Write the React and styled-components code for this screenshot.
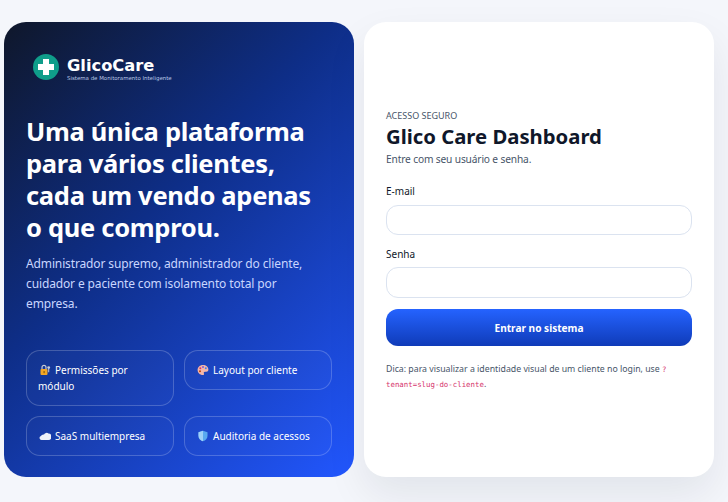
import styled, { createGlobalStyle } from "styled-components";

const Global = createGlobalStyle`
  * { box-sizing: border-box; }
  html, body { margin: 0; height: 100%; }
  body {
    background: #f4f6fb;
    font-family: "Noto Sans", "Open Sans", sans-serif;
    overflow: hidden;
  }
`;

const Page = styled.div`
  display: grid;
  grid-template-columns: 350px 350px;
  gap: 10px;
  padding: 22px 0 0 4px;
  height: 502px;
`;

const Hero = styled.section`
  height: 455px;
  border-radius: 22px;
  padding: 30px 22px 21px 22px;
  color: #fff;
  background: linear-gradient(135deg, #0f172a 0%, #0e2e88 42%, #2257ff 100%);
  display: flex;
  flex-direction: column;
`;

const Brand = styled.div`
  display: flex;
  align-items: center;
  gap: 8px;
  padding-left: 7px;
  height: 30px;
`;

const BrandText = styled.div`
  display: flex;
  flex-direction: column;
  padding-top: 4px;
  font-family: "DejaVu Sans", sans-serif;
`;

const BrandName = styled.span`
  font-size: 16.3px;
  font-weight: 700;
  line-height: 18px;
`;

const BrandTag = styled.span`
  font-size: 5.45px;
  line-height: 7px;
  color: #b9c6e6;
`;

const Headline = styled.h1`
  margin: 33px 0 0;
  font-size: 25.5px;
  line-height: 32px;
  font-weight: 700;
  letter-spacing: -0.3px;
`;

const Lead = styled.p`
  margin: 11px 0 0;
  padding-right: 20px;
  font-size: 12px;
  line-height: 20px;
  letter-spacing: -0.13px;
  color: #c9d6ff;
`;

const Chips = styled.div`
  margin-top: auto;
  display: grid;
  grid-template-columns: 148px 148px;
  gap: 10px;
  align-items: start;
`;

const Chip = styled.div`
  border: 1px solid rgba(255, 255, 255, 0.2);
  border-radius: 14px;
  background: rgba(255, 255, 255, 0.02);
  padding: 11px;
  font-size: 10px;
  line-height: 16px;
  min-height: 40px;
  ${(p) => p.$tall && "min-height: 56px;"}
`;

const ChipIcon = styled.svg`
  display: inline-block;
  width: 12px;
  height: 12px;
  margin: 0 4px 0 1px;
  vertical-align: -2px;
`;

const Card = styled.section`
  height: 455px;
  border-radius: 22px;
  background: #fff;
  padding: 2px 22px 0;
  box-shadow: 0 18px 40px rgba(15, 23, 42, 0.08);
  display: flex;
  flex-direction: column;
  justify-content: center;
`;

const Eyebrow = styled.div`
  font-size: 9px;
  line-height: 14px;
  color: #475569;
  text-transform: uppercase;
`;

const Title = styled.h2`
  margin: -1px 0 0;
  font-size: 20.3px;
  line-height: 28px;
  font-weight: 700;
  color: #0f172a;
`;

const Sub = styled.p`
  margin: 1px 0 0;
  font-size: 10.2px;
  line-height: 16px;
  letter-spacing: -0.15px;
  color: #475569;
`;

const Form = styled.form`
  margin-top: 16px;
  display: flex;
  flex-direction: column;
`;

const Label = styled.label`
  font-size: 10px;
  line-height: 16px;
  color: #0f172a;
  margin-bottom: ${(p) => (p.$tight ? "5px" : "6px")};
`;

const Input = styled.input`
  height: ${(p) => (p.$last ? "31px" : "30px")};
  border: 1px solid #dbe3f0;
  border-radius: 12px;
  background: #fff;
  margin-bottom: 11px;
  outline: none;
`;

const Submit = styled.button`
  height: 37px;
  border: 0;
  border-radius: 12px;
  background: linear-gradient(180deg, #2563ff 0%, #0f3bb8 100%);
  color: #fff;
  font-family: inherit;
  font-size: 10.1px;
  font-weight: 700;
`;

const Hint = styled.p`
  margin: 16px 0 0;
  font-size: 8.75px;
  line-height: 14px;
  color: #475569;
`;

const Code = styled.code`
  font-family: "DejaVu Sans Mono", monospace;
  font-size: 7.4px;
  color: #d6336c;
`;

const Lock = () => (
  <ChipIcon viewBox="0 0 12 12">
    <path d="M3 5V3.4a2 2 0 0 1 4 0V5" fill="none" stroke="#c9ccd4" strokeWidth="1.2" />
    <rect x="1.5" y="5" width="7" height="6" rx="1" fill="#f5a623" />
    <rect x="4.5" y="7" width="1.2" height="2.2" fill="#8a5a10" />
    <circle cx="9.7" cy="3.6" r="1.4" fill="#c8ccd6" />
    <path d="M9.2 4.6h1v3.6h-1z" fill="#c8ccd6" />
  </ChipIcon>
);

const Palette = () => (
  <ChipIcon viewBox="0 0 12 12">
    <path d="M6 1C2.8 1 .6 3.2.6 6s2.300 5 5.200 5c1.300 0 1.500-.9 1.100-1.600-.4-.8 0-1.600 1-1.600h1.500c1.200 0 2-.8 2-2C11.400 2.800 9 1 6 1z" fill="#f4b6a8" />
    <circle cx="3.300" cy="4.300" r="1" fill="#d6336c" />
    <circle cx="6" cy="3" r="1" fill="#7c5cd6" />
    <circle cx="8.800" cy="4.300" r="1" fill="#3b82f6" />
    <circle cx="3" cy="7.200" r="1" fill="#c2410c" />
  </ChipIcon>
);

const Cloud = () => (
  <ChipIcon viewBox="0 0 12 12">
    <path d="M2.500 10a2 2 0 0 1-.6-3.900A3 3 0 0 1 5 4.500 3 3 0 0 1 9.500 3.500 3.200 3.200 0 0 1 9 10z" fill="#eef1f8" />
  </ChipIcon>
);

const Shield = () => (
  <ChipIcon viewBox="0 0 12 12">
    <path d="M6 .8 10.500 2.300v3.500c0 2.800-1.900 4.600-4.500 5.500C3.400 10.400 1.500 8.600 1.500 5.800V2.300z" fill="#5aa9f0" />
    <path d="M6 .8 1.500 2.300v3.500c0 2.800 1.900 4.600 4.500 5.500z" fill="#9fd0f7" />
  </ChipIcon>
);

export default function App() {
  return (
    <>
      <Global />
      <Page>
        <Hero>
          <Brand>
            <svg width="26" height="26" viewBox="0 0 26 26">
              <circle cx="13" cy="13" r="13" fill="#0f9d8a" />
              <path d="M10 5h6v5h5v6h-5v5h-6v-5H5v-6h5z" fill="#fff" />
            </svg>
            <BrandText>
              <BrandName>GlicoCare</BrandName>
              <BrandTag>Sistema de Monitoramento Inteligente</BrandTag>
            </BrandText>
          </Brand>
          <Headline>
            Uma única plataforma para vários clientes, cada um vendo apenas o que comprou.
          </Headline>
          <Lead>
            Administrador supremo, administrador do cliente, cuidador e paciente com isolamento total por empresa.
          </Lead>
          <Chips>
            <Chip $tall><Lock />Permissões por módulo</Chip>
            <Chip><Palette />Layout por cliente</Chip>
            <Chip><Cloud />SaaS multiempresa</Chip>
            <Chip><Shield />Auditoria de acessos</Chip>
          </Chips>
        </Hero>
        <Card>
          <Eyebrow>Acesso seguro</Eyebrow>
          <Title>Glico Care Dashboard</Title>
          <Sub>Entre com seu usuário e senha.</Sub>
          <Form onSubmit={(e) => e.preventDefault()}>
            <Label>E-mail</Label>
            <Input type="email" />
            <Label $tight>Senha</Label>
            <Input type="password" $last />
            <Submit>Entrar no sistema</Submit>
          </Form>
          <Hint>
            Dica: para visualizar a identidade visual de um cliente no login, use <Code>?tenant=slug-do-cliente</Code>.
          </Hint>
        </Card>
      </Page>
    </>
  );
}
